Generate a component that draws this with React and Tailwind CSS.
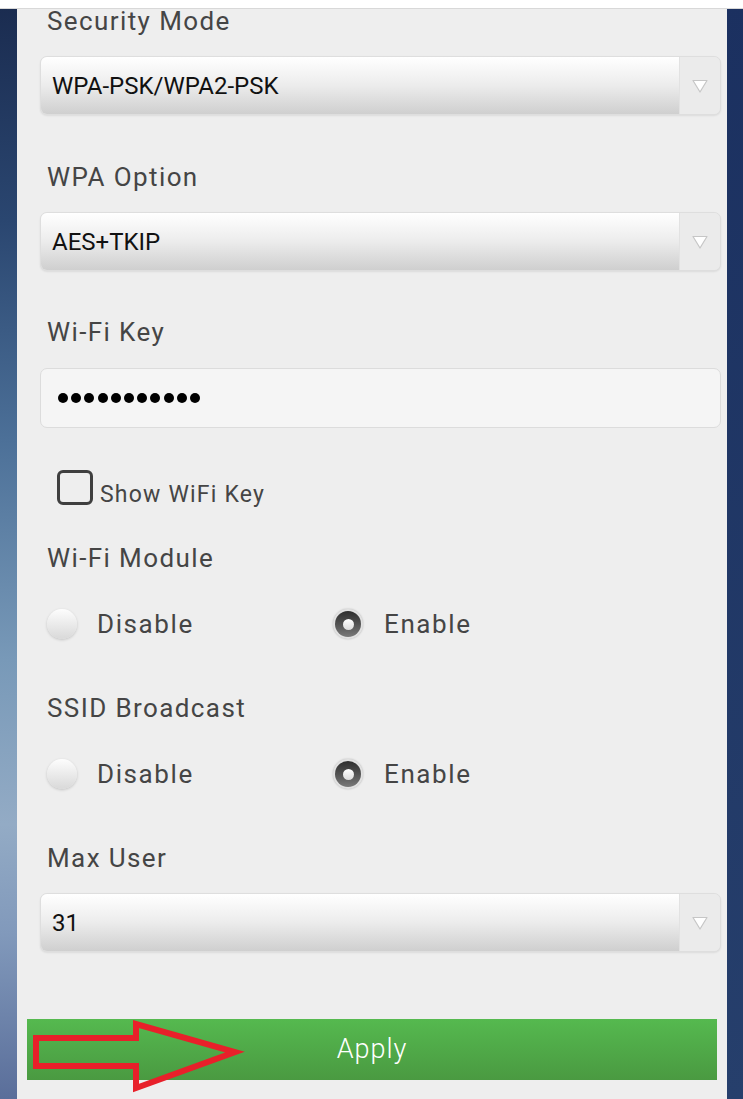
import React from 'react'

const font = { fontFamily: '"Roboto", "Liberation Sans", sans-serif' }

function Label({ children, className = '' }) {
  return (
    <div className={`ml-[30px] h-[28px] leading-[28px] text-[26px] text-[#454545] tracking-[1.4px] ${className}`}>
      {children}
    </div>
  )
}

function Select({ value, className = '' }) {
  return (
    <div className={`ml-[23px] mr-[6px] h-[59px] flex rounded-[7px] border border-[#dedede] bg-[#ececec] shadow-[0_1px_2px_rgba(0,0,0,0.08)] overflow-hidden ${className}`}>
      <div className="flex-1 flex items-center pl-[11px] bg-gradient-to-b from-white via-[#ececec] to-[#cfcfcf] text-[24px] text-[#111]">
        {value}
      </div>
      <div className="w-[41px] flex items-center justify-center bg-[#ebebeb] border-l border-[#e2e2e2]">
        <svg width="16" height="14" viewBox="0 0 16 14">
          <path d="M1 1.5 L15 1.5 L8 13 Z" fill="#ffffff" stroke="#c6c6c6" strokeWidth="1.2" strokeLinejoin="round" />
        </svg>
      </div>
    </div>
  )
}

function Radio({ checked }) {
  if (checked) {
    return (
      <div className="w-[30px] h-[30px] rounded-full bg-[#e2e2e2] p-[2px] shadow-[0_0_2px_rgba(0,0,0,0.25)]">
        <div className="w-full h-full rounded-full bg-gradient-to-b from-[#2e2e2e] to-[#7a7a7a] flex items-center justify-center">
          <div className="w-[11px] h-[11px] rounded-full bg-gradient-to-b from-white to-[#dcdcdc]" />
        </div>
      </div>
    )
  }
  return (
    <div className="w-[30px] h-[30px] rounded-full bg-gradient-to-b from-[#fdfdfd] to-[#d9d9d9] shadow-[0_1px_3px_rgba(0,0,0,0.18)]" />
  )
}

function RadioRow({ className = '' }) {
  return (
    <div className={`h-[30px] flex items-center text-[26px] text-[#454545] tracking-[1.6px] ${className}`}>
      <div className="ml-[30px] w-[286px] flex items-center">
        <Radio />
        <span className="ml-[20px]">Disable</span>
      </div>
      <Radio checked />
      <span className="ml-[21px]">Enable</span>
    </div>
  )
}

export default function App() {
  return (
    <div className="relative w-[743px] h-[1099px] overflow-hidden flex" style={font}>
      <div className="w-[17px] h-full bg-[linear-gradient(to_bottom,#1a2b4f_0%,#2a4670_20%,#4c7098_40%,#7899b8_60%,#93abc5_75%,#8199bb_85%,#5a6e9a_100%)]" />
      <div className="w-[710px] h-full bg-[#eeeeee] pt-[9px] flex flex-col">
        <Label className="-mt-[2px]">Security Mode</Label>
        <Select value="WPA-PSK/WPA2-PSK" className="mt-[21px]" />

        <Label className="mt-[48px]">WPA Option</Label>
        <Select value="AES+TKIP" className="mt-[21px]" />

        <Label className="mt-[47px]">Wi-Fi Key</Label>
        <div className="ml-[23px] mr-[6px] mt-[22px] h-[60px] flex items-center gap-[3.2px] pl-[17px] rounded-[7px] border border-[#dcdcdc] bg-[#f5f5f5]">
          {Array.from({ length: 11 }).map((_, i) => (
            <span key={i} className="w-[10px] h-[10px] rounded-full bg-black" />
          ))}
        </div>

        <div className="mt-[42px] h-[35px] flex items-end">
          <div className="ml-[40px] w-[36px] h-[35px] rounded-[6px] border-[3px] border-[#3f3f3f]" />
          <span className="ml-[7px] text-[23px] leading-[26px] text-[#454545] tracking-[1.2px] -mb-[3px]">Show WiFi Key</span>
        </div>

        <Label className="mt-[39px]">Wi-Fi Module</Label>
        <RadioRow className="mt-[37px]" />

        <Label className="mt-[55px]">SSID Broadcast</Label>
        <RadioRow className="mt-[37px]" />

        <Label className="mt-[55px]">Max User</Label>
        <Select value="31" className="mt-[21px]" />

        <div className="relative ml-[10px] mr-[10px] mt-[67px] h-[61px] flex items-center justify-center bg-gradient-to-b from-[#55b94f] to-[#4a9a41] text-white text-[27px] font-light tracking-[1px]">
          Apply
          <svg className="absolute left-0 top-0 overflow-visible" width="690" height="61">
            <polygon
              points="9,19 109,19 109,5 208,33 109,69 109,47 9,47"
              fill="none"
              stroke="#e8202a"
              strokeWidth="6"
              strokeLinejoin="miter"
            />
          </svg>
        </div>
      </div>
      <div className="flex-1 h-full bg-gradient-to-b from-[#1b3060] to-[#263f6c]" />
      <div className="absolute left-0 top-0 w-full h-[9px] bg-white border-b border-[#d8d8d8]" />
    </div>
  )
}
